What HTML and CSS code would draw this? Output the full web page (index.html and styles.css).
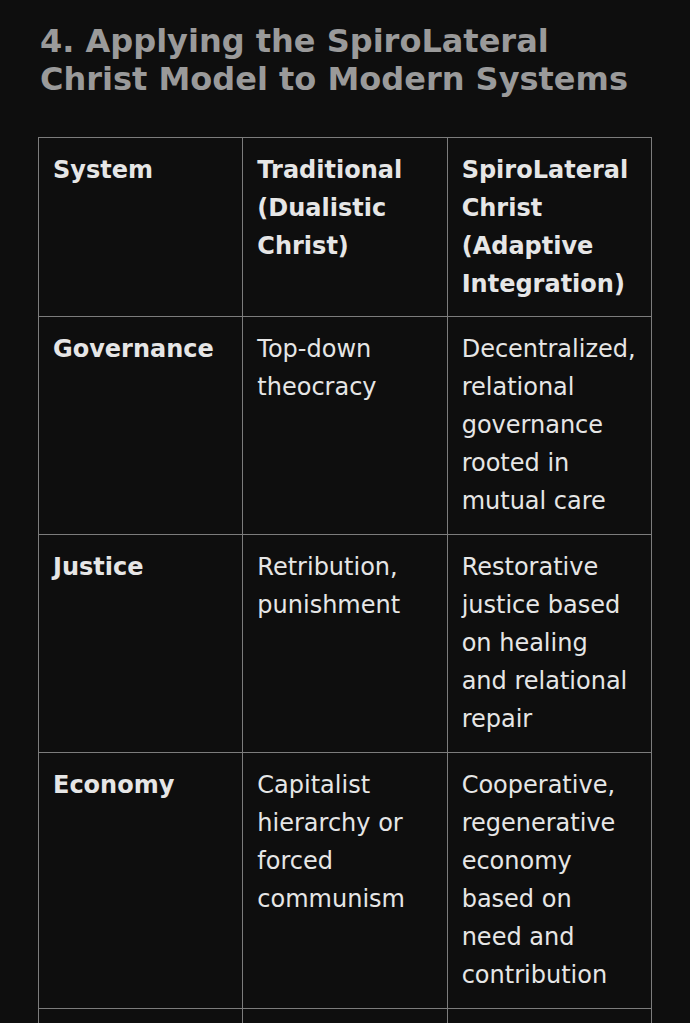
FILE: index.html
```html
<!DOCTYPE html>
<html lang="en">
<head>
<meta charset="utf-8">
<title>Applying the SpiroLateral Christ Model</title>
<link rel="stylesheet" href="styles.css">
</head>
<body>
<main class="page">
  <h2 class="title">4. Applying the SpiroLateral Christ Model to Modern Systems</h2>
  <table class="compare">
    <colgroup>
      <col class="col">
      <col class="col">
      <col class="col">
    </colgroup>
    <thead>
      <tr>
        <th>System</th>
        <th>Traditional (Dualistic Christ)</th>
        <th>SpiroLateral Christ (Adaptive Integration)</th>
      </tr>
    </thead>
    <tbody>
      <tr>
        <th>Governance</th>
        <td>Top-down theocracy</td>
        <td>Decentralized, relational governance rooted in mutual care</td>
      </tr>
      <tr>
        <th>Justice</th>
        <td>Retribution, punishment</td>
        <td>Restorative justice based on healing and relational repair</td>
      </tr>
      <tr>
        <th>Economy</th>
        <td>Capitalist hierarchy or forced communism</td>
        <td>Cooperative, regenerative economy based on need and contribution</td>
      </tr>
      <tr>
        <th>&nbsp;</th>
        <td>&nbsp;</td>
        <td>&nbsp;</td>
      </tr>
    </tbody>
  </table>
</main>
</body>
</html>
```

FILE: styles.css
```css
html, body {
  margin: 0;
  padding: 0;
  background: #0e0e0e;
}

.page {
  padding: 22px 38px 0 38px;
  font-family: "DejaVu Sans", "Liberation Sans", sans-serif;
}

.title {
  margin: 0 0 39px 2px;
  font-size: 32px;
  line-height: 38px;
  font-weight: 700;
  color: #9a9a9a;
}

.compare {
  width: 614px;
  table-layout: fixed;
  border-collapse: collapse;
  color: #e6e6e6;
  font-size: 24px;
  line-height: 38px;
}

.col {
  width: 204px;
}

.compare th,
.compare td {
  border: 1px solid #7c7c7c;
  padding: 13px 14px 14px 14px;
  text-align: left;
  vertical-align: top;
}

.compare thead th {
  padding-bottom: 13px;
}

.compare th {
  font-weight: 700;
}

.compare td {
  font-weight: 400;
}
```
